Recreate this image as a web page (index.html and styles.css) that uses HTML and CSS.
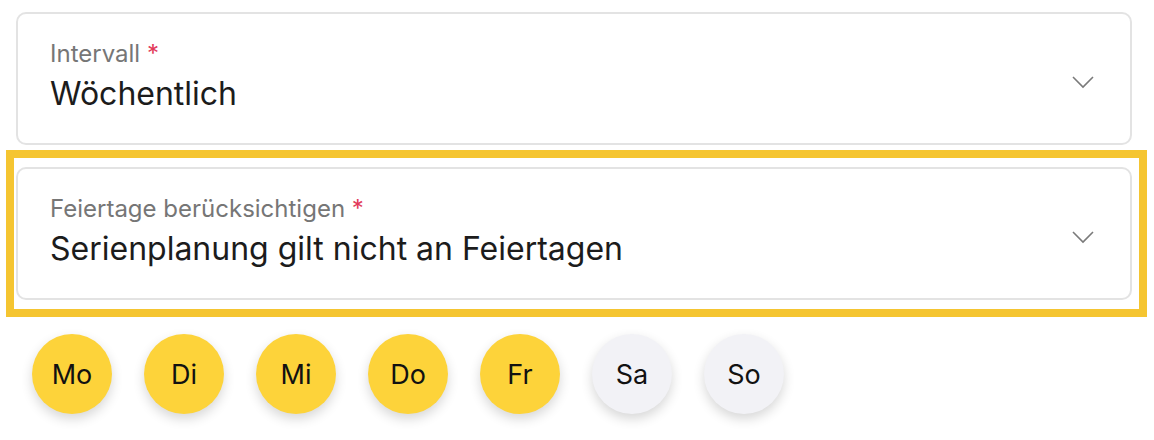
FILE: index.html
```html
<!DOCTYPE html>
<html lang="de">
<head>
<meta charset="utf-8">
<link rel="stylesheet" href="styles.css">
</head>
<body>
<div class="page">
  <div class="field field-first">
    <div class="field-text">
      <div class="label">Intervall <span class="req">*</span></div>
      <div class="value">Wöchentlich</div>
    </div>
    <svg class="chev" width="22" height="13" viewBox="0 0 22 13"><path d="M1 1 L11 11 L21 1" fill="none" stroke="#7a7a7a" stroke-width="1.6"/></svg>
  </div>
  <div class="highlight">
    <div class="field">
      <div class="field-text">
        <div class="label">Feiertage berücksichtigen <span class="req">*</span></div>
        <div class="value">Serienplanung gilt nicht an Feiertagen</div>
      </div>
      <svg class="chev" width="22" height="13" viewBox="0 0 22 13"><path d="M1 1 L11 11 L21 1" fill="none" stroke="#7a7a7a" stroke-width="1.6"/></svg>
    </div>
  </div>
  <div class="days">
    <div class="day on">Mo</div>
    <div class="day on">Di</div>
    <div class="day on">Mi</div>
    <div class="day on">Do</div>
    <div class="day on">Fr</div>
    <div class="day off">Sa</div>
    <div class="day off">So</div>
  </div>
</div>
</body>
</html>
```

FILE: styles.css
```css
* { box-sizing: border-box; }
html, body { margin: 0; padding: 0; background: #fff; }
body { font-family: Inter, "Noto Sans", sans-serif; width: 1154px; height: 440px; overflow: hidden; }
.page { padding-top: 12px; }
.field {
  width: 1116px;
  height: 133px;
  border: 2px solid #e3e3e3;
  border-radius: 10px;
  background: #fff;
  display: flex;
  align-items: flex-start;
  justify-content: space-between;
  padding: 26px 36px 0 32px;
}
.field-first { margin-left: 16px; }
.field-text { display: flex; flex-direction: column; gap: 7px; }
.label { font-size: 24px; line-height: 28px; color: #767676; }
.req { color: #e23a5a; }
.value { font-size: 32px; line-height: 38px; color: #1c1c1c; }
.chev { margin-top: 36px; flex: none; }
.highlight {
  margin: 5px 0 0 6px;
  width: 1141px;
  border: 8px solid #f5c531;
  padding: 9px 7px 9px 2px;
}
.days { display: flex; gap: 32px; padding: 17px 0 0 32px; }
.day {
  width: 80px; height: 80px; border-radius: 50%;
  display: flex; align-items: center; justify-content: center;
  font-size: 27px; color: #111;
  box-shadow: 0 5px 12px rgba(0,0,0,0.16);
}
.day.on { background: #fdd33a; }
.day.off { background: #f2f2f6; }
```
